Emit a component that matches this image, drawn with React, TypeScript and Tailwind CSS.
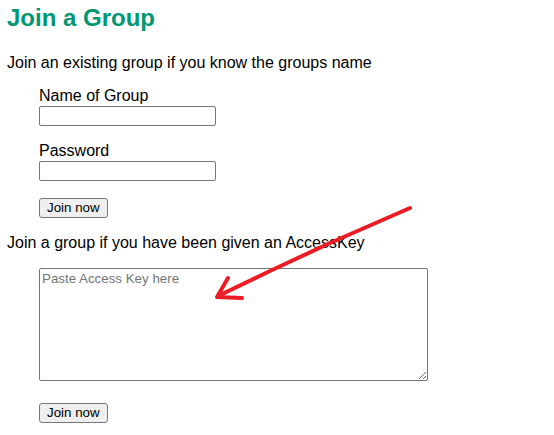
export default function App() {
  return (
    <div className="relative h-[435px] w-[554px] overflow-hidden bg-white px-[7px] font-['Liberation_Sans',Arial,sans-serif] text-black">
      <h1 className="pt-[4px] text-[24px] font-bold leading-[28px] text-[#009872]">Join a Group</h1>

      <p className="mt-[22px] text-[16px] leading-[18px]">Join an existing group if you know the groups name</p>

      <form className="ml-[32px] flex flex-col items-start" onSubmit={(e) => e.preventDefault()}>
        <label htmlFor="group-name" className="mt-[15px] text-[16px] leading-[18px]">
          Name of Group
        </label>
        <input
          id="group-name"
          type="text"
          className="mt-[1px] h-[20px] w-[177px] rounded-[2px] border border-[#767676] bg-white px-[2px] text-[13.33px]"
        />
        <label htmlFor="group-password" className="mt-[16px] text-[16px] leading-[18px]">
          Password
        </label>
        <input
          id="group-password"
          type="password"
          className="mt-[1px] h-[20px] w-[177px] rounded-[2px] border border-[#767676] bg-white px-[2px] text-[13.33px]"
        />
        <button
          type="submit"
          className="mt-[17px] h-[20px] rounded-[3px] border border-[#767676] bg-[#efefef] px-[7px] text-[13.33px] leading-[18px] text-black"
        >
          Join now
        </button>
      </form>

      <p className="mt-[16px] text-[16px] leading-[18px]">Join a group if you have been given an AccessKey</p>

      <form className="ml-[32px] flex flex-col items-start" onSubmit={(e) => e.preventDefault()}>
        <textarea
          placeholder="Paste Access Key here"
          className="mt-[16px] h-[113px] w-[389px] rounded-[2px] border border-[#767676] bg-white p-[2px] text-[13.33px] leading-[15px] placeholder:text-[#757575]"
        />
        <button
          type="submit"
          className="mt-[22px] h-[20px] rounded-[3px] border border-[#767676] bg-[#efefef] px-[7px] text-[13.33px] leading-[18px] text-black"
        >
          Join now
        </button>
      </form>

      <svg
        className="pointer-events-none absolute left-0 top-0"
        width="554"
        height="435"
        viewBox="0 0 554 435"
      >
        <g fill="none" stroke="#ed1c24" strokeWidth="4" strokeLinecap="round" strokeLinejoin="round">
          <path d="M410 208 L330 243 L270 271 L218 296" />
          <path d="M228 278 L217 297 L242 298" />
        </g>
      </svg>
    </div>
  );
}
